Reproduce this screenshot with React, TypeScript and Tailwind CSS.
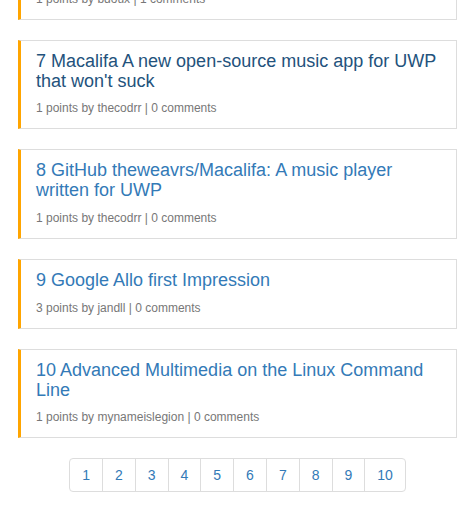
import React from 'react';

const stories = [
  { rank: 6, title: 'Show HN: A tiny static site generator', points: 1, by: 'bdoux', comments: 1 },
  { rank: 7, title: "Macalifa A new open-source music app for UWP that won't suck", points: 1, by: 'thecodrr', comments: 0, visited: true },
  { rank: 8, title: 'GitHub theweavrs/Macalifa: A music player written for UWP', points: 1, by: 'thecodrr', comments: 0 },
  { rank: 9, title: 'Google Allo first Impression', points: 3, by: 'jandll', comments: 0 },
  { rank: 10, title: 'Advanced Multimedia on the Linux Command Line', points: 1, by: 'mynameislegion', comments: 0 },
];

const pages = [1, 2, 3, 4, 5, 6, 7, 8, 9, 10];

export default function App() {
  return (
    <div className="bg-white min-h-[513px] overflow-hidden font-['Liberation_Sans',Arial,sans-serif]">
      <div className="-mt-[50px] px-[18px]">
        {stories.map((s) => (
          <div
            key={s.rank}
            className="mb-5 border border-[#dddddd] border-l-[3px] border-l-[#ffa500] pl-[15px] pr-4 pt-[11px] pb-[11px]"
          >
            <h3
              className={`text-[18px] leading-[1.1] mb-[9px] ${
                s.visited ? 'text-[#23527c]' : 'text-[#337ab7]'
              }`}
            >
              {s.rank} {s.title}
            </h3>
            <div className="text-[12px] leading-[17px] text-[#777777]">
              {s.points} points by {s.by} | {s.comments} comments
            </div>
          </div>
        ))}

        {/* Pagination */}
        <div className="flex justify-center">
          <ul className="flex">
            {pages.map((p, i) => (
              <li key={p} className={i === 0 ? '' : '-ml-px'}>
                <a
                  className={`block border border-[#dddddd] px-3 py-1.5 text-[14px] leading-5 text-[#337ab7] ${
                    i === 0 ? 'rounded-l' : ''
                  } ${i === pages.length - 1 ? 'rounded-r' : ''}`}
                >
                  {p}
                </a>
              </li>
            ))}
          </ul>
        </div>
      </div>
    </div>
  );
}
